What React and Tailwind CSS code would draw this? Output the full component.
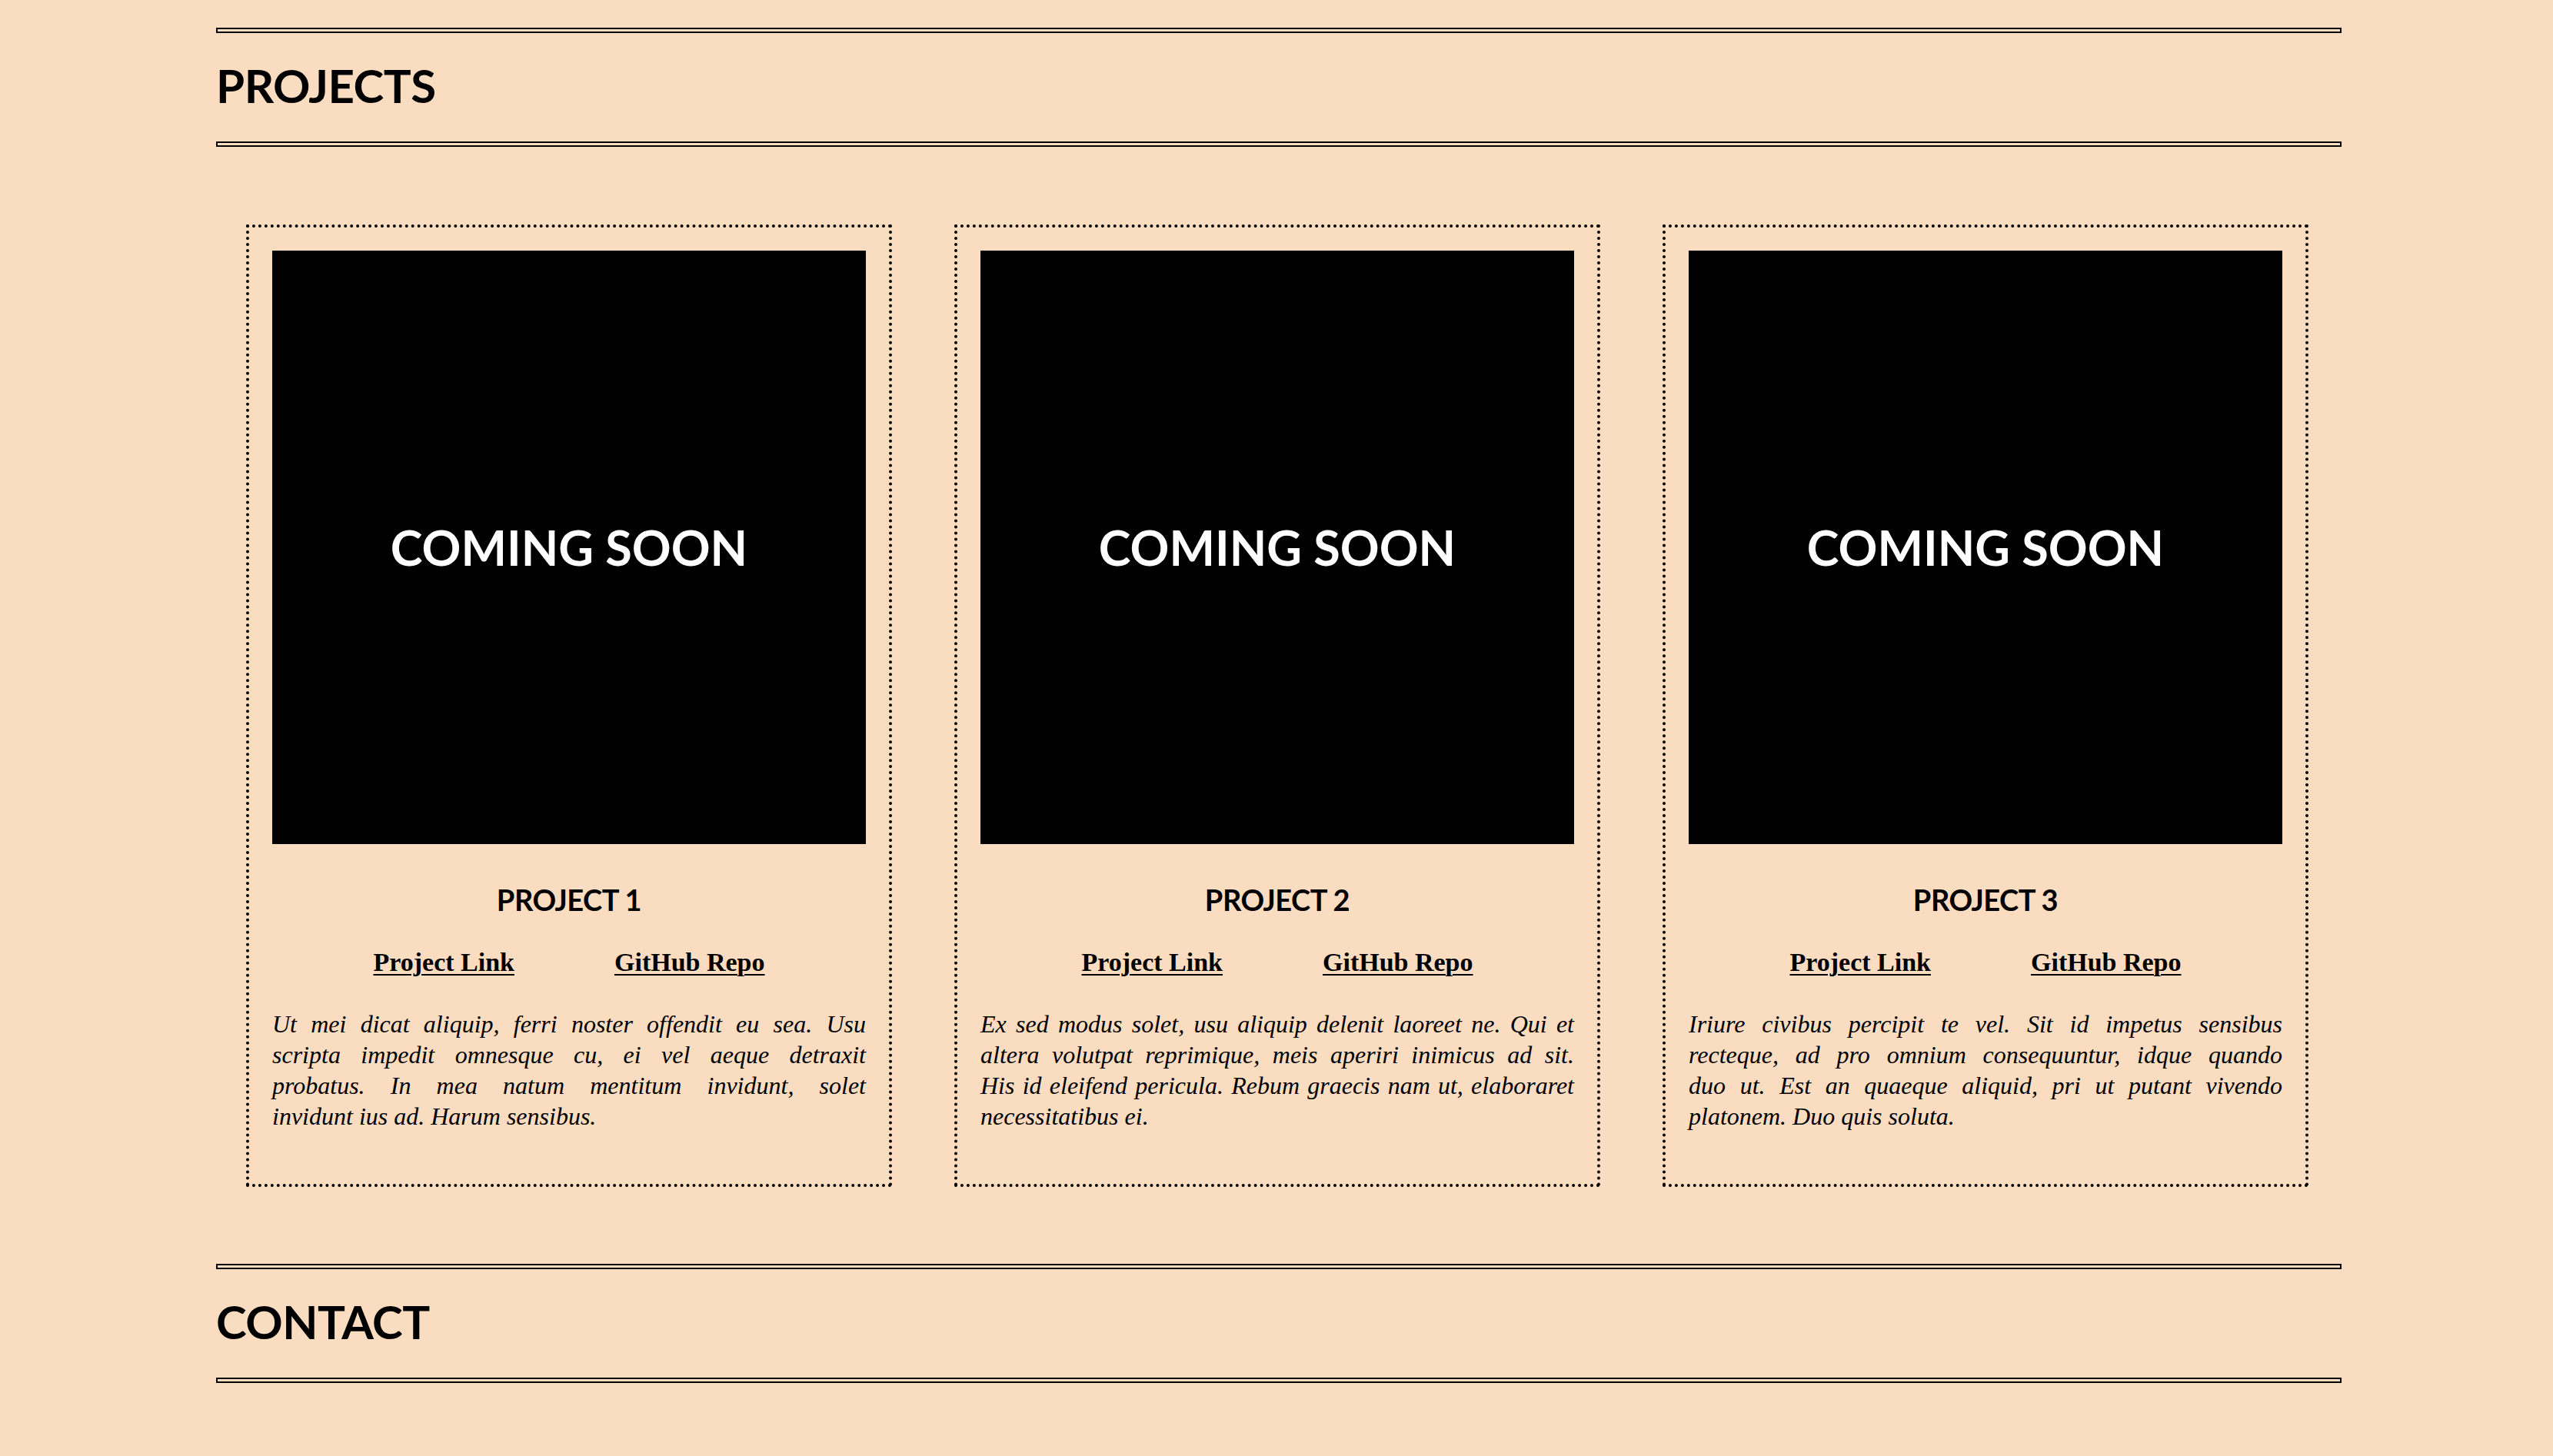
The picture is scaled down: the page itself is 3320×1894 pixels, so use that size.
const projects = [
  {
    title: "PROJECT 1",
    lines: [
      "Ut mei dicat aliquip, ferri noster offendit eu sea. Usu",
      "scripta impedit omnesque cu, ei vel aeque detraxit",
      "probatus. In mea natum mentitum invidunt, solet",
      "invidunt ius ad. Harum sensibus.",
    ],
  },
  {
    title: "PROJECT 2",
    lines: [
      "Ex sed modus solet, usu aliquip delenit laoreet ne. Qui et",
      "altera volutpat reprimique, meis aperiri inimicus ad sit.",
      "His id eleifend pericula. Rebum graecis nam ut, elaboraret",
      "necessitatibus ei.",
    ],
  },
  {
    title: "PROJECT 3",
    lines: [
      "Iriure civibus percipit te vel. Sit id impetus sensibus",
      "recteque, ad pro omnium consequuntur, idque quando",
      "duo ut. Est an quaeque aliquid, pri ut putant vivendo",
      "platonem. Duo quis soluta.",
    ],
  },
];

const Rule = () => <div className="h-[7px] border-2 border-black"></div>;

const SectionHeader = ({ title }) => (
  <div>
    <Rule />
    <h2 className="mt-[32px] mb-[37px] font-['Lato',sans-serif] text-[60px] font-bold leading-[72px] tracking-[-0.5px] text-black">
      {title}
    </h2>
    <Rule />
  </div>
);

const ProjectCard = ({ project }) => (
  <div className="flex flex-col border-4 border-dotted border-black p-[30px]">
    {/* Placeholder image */}
    <div className="flex items-center justify-center w-full bg-black aspect-square">
      <span className="font-['Lato',sans-serif] text-[63px] font-bold text-white">
        COMING SOON
      </span>
    </div>

    <h3 className="mt-[50px] text-center font-['Lato',sans-serif] text-[38px] font-bold leading-[44px] tracking-[-0.5px] text-black">
      {project.title}
    </h3>

    <div className="mt-[40px] flex justify-center gap-[130px] font-['Liberation_Serif',serif] text-[34px] font-bold leading-[40px] text-black">
      <a href="#" className="underline decoration-2 underline-offset-[4px]">
        Project Link
      </a>
      <a href="#" className="underline decoration-2 underline-offset-[4px]">
        GitHub Repo
      </a>
    </div>

    {/* Description, justified line by line */}
    <p className="mt-[40px] mb-[38px] font-['Liberation_Serif',serif] text-[32px] italic leading-[40px] text-black">
      {project.lines.map((line, i) =>
        i < project.lines.length - 1 ? (
          <span key={i} className="block text-justify [text-align-last:justify]">
            {line}
          </span>
        ) : (
          <span key={i} className="block text-left">
            {line}
          </span>
        )
      )}
    </p>
  </div>
);

const App = () => {
  return (
    <div className="min-h-screen bg-[#fadcc0]">
      <div className="ml-[281px] w-[2764px] pt-[36px] pb-[100px]">
        {/* Projects */}
        <section>
          <SectionHeader title="PROJECTS" />
          <div className="mt-[101px] grid grid-cols-3 gap-[81px] pl-[39px] pr-[43px]">
            {projects.map((p) => (
              <ProjectCard key={p.title} project={p} />
            ))}
          </div>
        </section>

        {/* Contact */}
        <section className="mt-[100px]">
          <SectionHeader title="CONTACT" />
        </section>
      </div>
    </div>
  );
};

export default App;
